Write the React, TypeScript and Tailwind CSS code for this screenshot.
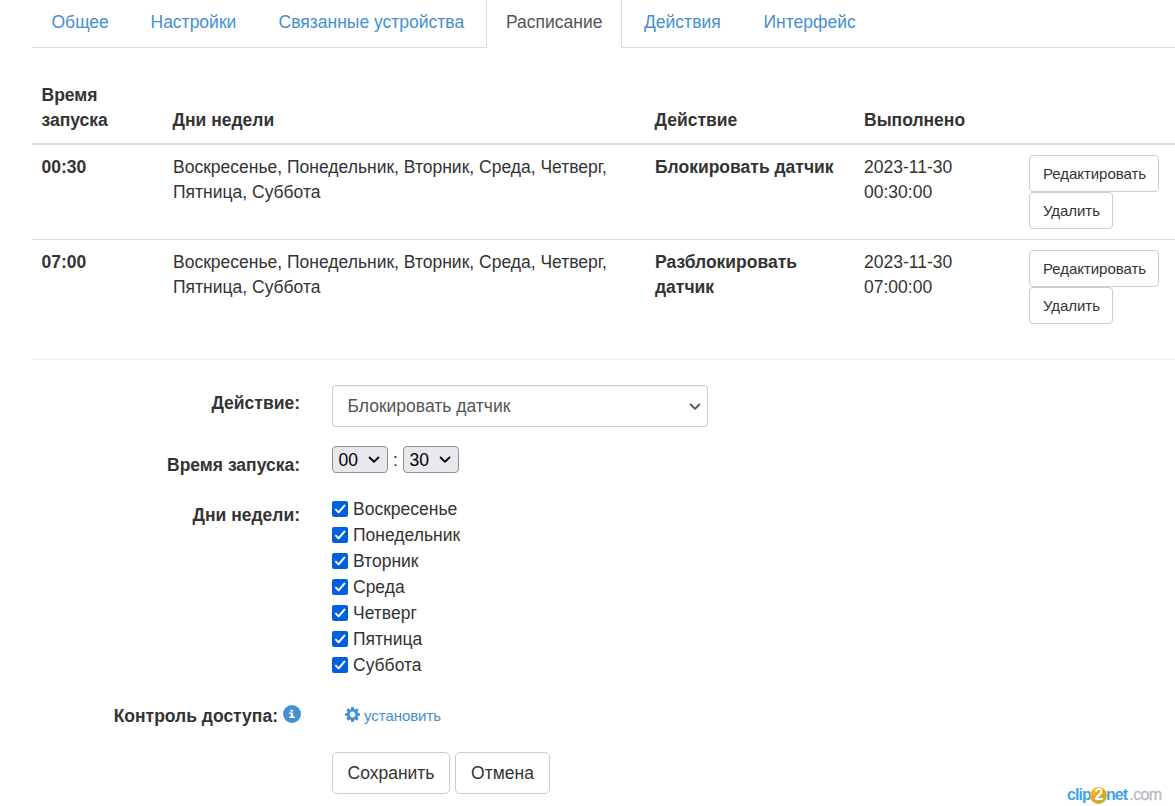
const days = ["Воскресенье", "Понедельник", "Вторник", "Среда", "Четверг", "Пятница", "Суббота"];

const rows = [
  { time: "00:30", action: "Блокировать датчик", done: "2023-11-30 00:30:00" },
  { time: "07:00", action: "Разблокировать датчик", done: "2023-11-30 07:00:00" },
];

function Chevron({ className }: { className: string }) {
  return (
    <svg className={className} width="12" height="8" viewBox="0 0 12 8" fill="none" stroke="currentColor" strokeWidth="1.8">
      <path d="M1.6 1.5 6 5.9 10.4 1.5" strokeLinecap="round" strokeLinejoin="round" />
    </svg>
  );
}

function Gear() {
  return (
    <svg width="15" height="15" viewBox="-7.5 -7.5 15 15" className="shrink-0 text-[#4490d2]">
      {[0, 45, 90, 135].map((a) => (
        <path key={a} transform={`rotate(${a})`} d="M-1.3 -7.4H1.3L1.8 -4H-1.8ZM-1.3 7.4H1.3L1.8 4H-1.8Z" fill="currentColor" />
      ))}
      <circle r="4.2" fill="none" stroke="currentColor" strokeWidth="2.6" />
    </svg>
  );
}

function Info() {
  return (
    <svg width="18" height="18" viewBox="0 0 18 18" className="shrink-0">
      <circle cx="9" cy="9" r="9" fill="#4490d2" />
      <path d="M7.4 4.8h2.6v1.8H7.4zM6.2 7.6h3.9v4h1.7v1.5H6.2v-1.5h1.5V9.1H6.2z" fill="#fff" />
    </svg>
  );
}

function Check() {
  return (
    <svg width="16" height="16" viewBox="0 0 16 16" className="shrink-0">
      <rect width="16" height="16" rx="2" fill="#0060df" />
      <path d="M3.9 8.6 6.6 11.4 12.4 4.6" fill="none" stroke="#fff" strokeWidth="2" strokeLinecap="round" strokeLinejoin="round" />
    </svg>
  );
}

function SmallButton({ label, width }: { label: string; width: string }) {
  return (
    <button className={`${width} flex h-[37px] items-center justify-center rounded-[4px] border border-[#ccc] bg-white pl-px text-[15px] tracking-[-0.05px] whitespace-nowrap`}>
      {label}
    </button>
  );
}

function TimeSelect({ value }: { value: string }) {
  return (
    <div className="flex h-[27px] w-14 items-center justify-between rounded-[4px] border border-[#8f8f9d] bg-[#e9e9ed] pr-[7px] pl-[5.5px] text-black">
      <span className="pt-0.5">{value}</span>
      <Chevron className="mt-px" />
    </div>
  );
}

export default function App() {
  return (
    <div className="flex h-[806px] w-[1175px] flex-col overflow-hidden bg-white font-['Liberation_Sans',Arial,sans-serif] text-[17.5px] leading-[25px] text-[#333]">
      <nav className="ml-8 flex h-12 shrink-0 whitespace-nowrap text-[#4490d2]">
        <a className="w-[99px] border-b border-[#ddd] pt-[10px] pl-[19.5px]">Общее</a>
        <a className="w-[128px] border-b border-[#ddd] pt-[10px] pl-[19.5px]">Настройки</a>
        <a className="w-[227px] border-b border-[#ddd] pt-[10px] pl-[19.5px]">Связанные устройства</a>
        <a className="w-[136px] border-x border-[#ddd] pt-[10px] pl-[19px] text-[#555]">Расписание</a>
        <a className="w-[120px] border-b border-[#ddd] pt-[10px] pl-[22px]">Действия</a>
        <a className="flex-1 border-b border-[#ddd] pt-[10px] pl-[21.5px]">Интерфейс</a>
      </nav>

      <section className="ml-8 shrink-0 pt-[24px]">
        <div className="grid h-[73px] grid-cols-[131px_482px_209px_165px_156px] items-end border-b-2 border-[#ddd] pb-[10px] font-bold">
          <div className="pl-[9.5px]">Время<br />запуска</div>
          <div className="pl-[9.5px]">Дни недели</div>
          <div className="pl-[9.5px]">Действие</div>
          <div className="pl-2.5">Выполнено</div>
        </div>
        {rows.map((r, i) => (
          <div
            key={r.time}
            className={`grid grid-cols-[131px_482px_209px_165px_156px] pb-[10px] ${i === 0 ? "h-[94px] pt-[10px]" : "h-[120px] border-t border-[#ddd] pt-[10px]"}`}
          >
            <div className="pl-[9.5px] font-bold">{r.time}</div>
            <div className="pr-2 pl-[10px]">{days.join(", ")}</div>
            <div className="pr-2.5 pl-[10px] font-bold">{r.action}</div>
            <div className="pr-12 pl-2.5">{r.done}</div>
            <div className="pl-2.5">
              <SmallButton label="Редактировать" width="w-[130px]" />
              <SmallButton label="Удалить" width="w-[84px]" />
            </div>
          </div>
        ))}
        <div className="h-px bg-[#eee]" />
      </section>

      <form className="grid shrink-0 grid-cols-[300px_1fr] gap-x-8 pt-[25px]">
        <div className="h-[61px] pt-[6px] text-right font-bold">Действие:</div>
        <div>
          <div className="flex h-[42px] w-[376px] items-center justify-between rounded-[4px] border border-[#ccc] bg-white pr-[6px] pl-[14.5px] text-[#555] shadow-[inset_0_1px_1px_rgba(0,0,0,0.04)]">
            <span>Блокировать датчик</span>
            <Chevron className="mt-px" />
          </div>
        </div>

        <div className="h-[54px] pt-[7px] text-right font-bold">Время запуска:</div>
        <div className="flex items-start">
          <TimeSelect value="00" />
          <span className="w-[15px] pt-[2px] text-center">:</span>
          <TimeSelect value="30" />
        </div>

        <div className="h-[203px] pt-[3px] text-right font-bold">Дни недели:</div>
        <div className="-mt-[4px]">
          {days.map((d) => (
            <label key={d} className="flex h-[26px] items-center gap-[5px]">
              <Check />
              <span>{d}</span>
            </label>
          ))}
        </div>

        <div className="flex h-[49px] justify-end gap-[5px] font-bold">
          <span className="pt-px">Контроль доступа:</span>
          <span className="-mr-px pt-[2px]"><Info /></span>
        </div>
        <div className="flex h-[25px] items-start gap-1 pl-[13px] text-[15px] text-[#4490d2]">
          <span className="pt-[4px]"><Gear /></span>
          <span className="tracking-[-0.05px]">установить</span>
        </div>

        <div className="col-start-2 flex gap-[5px]">
          <button type="button" className="h-[42px] w-[118px] rounded-[5px] border border-[#ccc] bg-white">Сохранить</button>
          <button type="button" className="h-[42px] w-[95px] rounded-[5px] border border-[#ccc] bg-white">Отмена</button>
        </div>
      </form>

      <div className="absolute top-[785px] left-[1067px] flex h-[20px] items-center text-[16px] leading-[20px] tracking-[-0.9px]">
        <span className="font-bold text-[#3fa3e6]">clip</span>
        <span className="-mx-px flex h-[17px] w-[17px] items-center justify-center rounded-full bg-linear-to-br from-[#f9d820] via-[#f09a1c] to-[#8cc63f] font-bold text-white">2</span>
        <span className="font-bold text-[#3fa3e6]">net</span>
        <span className="pl-[2px] tracking-[-0.6px] text-[#b9bcc4] [-webkit-text-stroke:0.4px_#b9bcc4]">.com</span>
      </div>
    </div>
  );
}
